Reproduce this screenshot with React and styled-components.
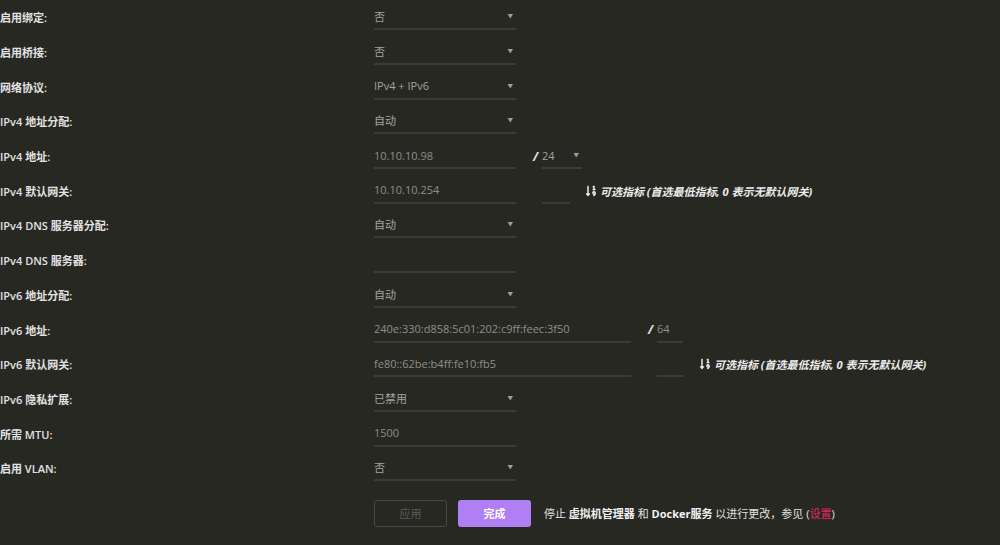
import React from "react";
import styled, { createGlobalStyle } from "styled-components";
import { FaSortNumericDown } from "react-icons/fa";

const GlobalStyle = createGlobalStyle`
  html, body {
    margin: 0;
    padding: 0;
    background: #282823;
  }
  body {
    font-family: "Open Sans", "Noto Sans CJK SC", sans-serif;
    font-size: 11px;
    color: #e4e4e4;
  }
`;

const Form = styled.div`
  display: flex;
  flex-direction: column;
`;

const Row = styled.div`
  display: grid;
  grid-template-columns: 374px 1fr;
  align-items: center;
  height: 34.7px;
`;

const Label = styled.div`
  font-weight: 600;
  color: #e2e2e2;
  white-space: nowrap;
`;

const Field = styled.div`
  display: flex;
  align-items: center;
`;

const TextInput = styled.input`
  box-sizing: border-box;
  width: ${(p) => p.$w}px;
  height: 26px;
  margin: 0 ${(p) => p.$gap || 0}px 0 0;
  padding: 0;
  background: transparent;
  border: none;
  border-bottom: 2px solid #3c3c37;
  color: #8e8e8a;
  font-family: inherit;
  font-size: 11px;
  outline: none;
`;

const SelectBox = styled.div`
  box-sizing: border-box;
  width: ${(p) => p.$w}px;
  height: 26px;
  display: flex;
  align-items: center;
  justify-content: space-between;
  padding-right: 3px;
  border-bottom: 2px solid #3c3c37;
  color: #a2a29e;
`;

const Caret = styled.span`
  font-size: 5.5px;
  color: #a0a09c;
`;

const Slash = styled.span`
  width: 9px;
  margin-left: 17px;
  font-weight: 700;
  font-style: italic;
  font-size: 12px;
  color: #e8e8e8;
`;

const Hint = styled.span`
  display: flex;
  align-items: center;
  gap: 3px;
  margin-left: 15px;
  font-weight: 700;
  font-style: italic;
  color: #ececec;
  white-space: nowrap;

  svg {
    font-size: 12px;
  }
`;

const Actions = styled.div`
  display: flex;
  align-items: center;
  gap: 11px;
  margin-top: 14px;
  padding-left: 374px;
`;

const Button = styled.button`
  box-sizing: border-box;
  width: 73px;
  height: 27px;
  border-radius: 3px;
  font-family: inherit;
  font-size: 11px;
  font-weight: ${(p) => (p.$primary ? 700 : 400)};
  cursor: pointer;
  border: ${(p) => (p.$primary ? "none" : "1px solid #4a4a45")};
  background: ${(p) => (p.$primary ? "#b07ef5" : "transparent")};
  color: ${(p) => (p.$primary ? "#ffffff" : "#5c5c57")};
`;

const Note = styled.span`
  margin-left: 2px;
  font-size: 11px;
  color: #e0e0e0;
  white-space: nowrap;

  b {
    font-weight: 700;
    color: #f2f2f2;
  }
`;

const Link = styled.a`
  color: #e3285d;
  text-decoration: none;
`;

const Select = ({ value, w = 142 }) => (
  <SelectBox $w={w}>
    <span>{value}</span>
    <Caret>▼</Caret>
  </SelectBox>
);

const MetricHint = () => (
  <Hint>
    <FaSortNumericDown />
    可选指标 (首选最低指标, 0 表示无默认网关)
  </Hint>
);

const rows = [
  { label: "启用绑定:", field: <Select value="否" /> },
  { label: "启用桥接:", field: <Select value="否" /> },
  { label: "网络协议:", field: <Select value="IPv4 + IPv6" /> },
  { label: "IPv4 地址分配:", field: <Select value="自动" /> },
  {
    label: "IPv4 地址:",
    field: (
      <>
        <TextInput $w={142} defaultValue="10.10.10.98" />
        <Slash>/</Slash>
        <Select value="24" w={40} />
      </>
    ),
  },
  {
    label: "IPv4 默认网关:",
    field: (
      <>
        <TextInput $w={142} $gap={26} defaultValue="10.10.10.254" />
        <TextInput $w={28} />
        <MetricHint />
      </>
    ),
  },
  { label: "IPv4 DNS 服务器分配:", field: <Select value="自动" /> },
  { label: "IPv4 DNS 服务器:", field: <TextInput $w={142} /> },
  { label: "IPv6 地址分配:", field: <Select value="自动" /> },
  {
    label: "IPv6 地址:",
    field: (
      <>
        <TextInput $w={257} defaultValue="240e:330:d858:5c01:202:c9ff:feec:3f50" />
        <Slash>/</Slash>
        <TextInput $w={26} defaultValue="64" />
      </>
    ),
  },
  {
    label: "IPv6 默认网关:",
    field: (
      <>
        <TextInput $w={257} $gap={26} defaultValue="fe80::62be:b4ff:fe10:fb5" />
        <TextInput $w={27} />
        <MetricHint />
      </>
    ),
  },
  { label: "IPv6 隐私扩展:", field: <Select value="已禁用" /> },
  { label: "所需 MTU:", field: <TextInput $w={142} defaultValue="1500" /> },
  { label: "启用 VLAN:", field: <Select value="否" /> },
];

export default function App() {
  return (
    <>
      <GlobalStyle />
      <Form>
        {rows.map((r) => (
          <Row key={r.label}>
            <Label>{r.label}</Label>
            <Field>{r.field}</Field>
          </Row>
        ))}
        <Actions>
          <Button>应用</Button>
          <Button $primary>完成</Button>
          <Note>
            停止 <b>虚拟机管理器</b> 和 <b>Docker服务</b> 以进行更改，参见 (
            <Link href="#">设置</Link>)
          </Note>
        </Actions>
      </Form>
    </>
  );
}
